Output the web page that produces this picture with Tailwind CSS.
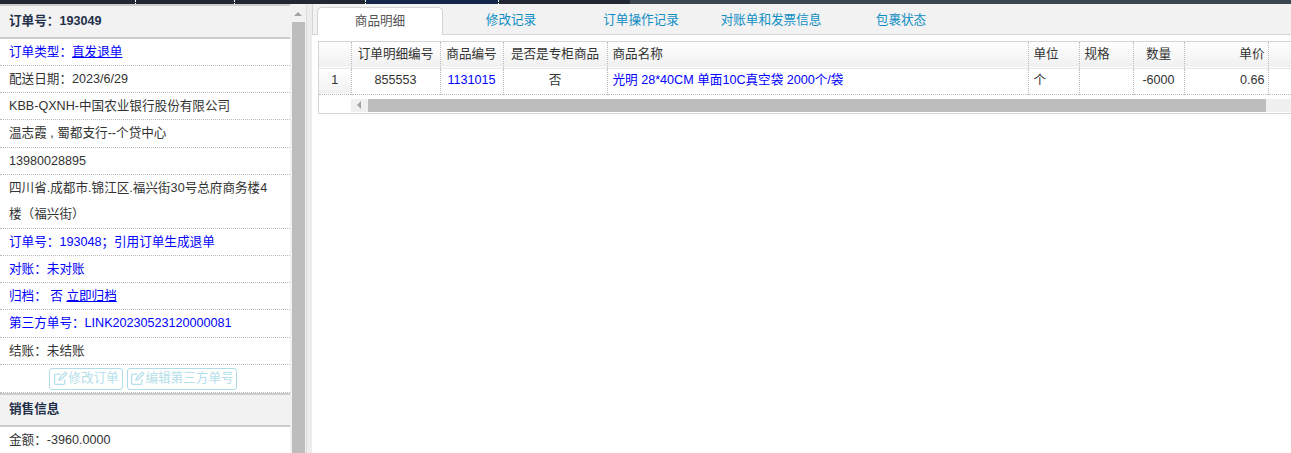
<!DOCTYPE html>
<html lang="zh-CN">
  <head>
    <meta charset="utf-8" />
    <meta name="viewport" content="width=device-width, initial-scale=1.0" />
    <title>订单明细</title>
    <script src="https://cdn.jsdelivr.net/npm/@tailwindcss/browser@4"></script>
  </head>
  <body class="h-[453px] w-[1291px] overflow-hidden bg-white font-['Liberation_Sans','Noto_Sans_CJK_SC',sans-serif] text-[12.6px] text-[#333]">
    <div class="flex h-1 bg-[#222831] [&>div]:border-r [&>div]:border-dotted [&>div]:border-white">
      <div class="w-[136px]"></div>
      <div class="w-[99px]"></div>
      <div class="w-[131px]"></div>
      <div class="w-[133px] bg-[#14274a]"></div>
      <div class="w-[131px] !border-r-0"></div>
      <div class="flex-1 !border-r-0 bg-[#3a4650]"></div>
    </div>
    <div class="flex h-[449px]">
      <aside class="flex w-[312px] shrink-0">
        <div class="w-[290px] shrink-0 overflow-hidden">
          <h2 class="flex h-[35px] items-center border-y-2 border-y-[#ccc] bg-[#f2f2f2] pl-[9px] font-bold text-[#1f3049]">订单号：193049</h2>
          <ul class="[&>li]:border-b [&>li]:border-dotted [&>li]:border-[#bbb] [&>li]:pl-[9px] [&>li]:leading-[26px]">
            <li class="h-[27px] text-[#00f]">订单类型：<span class="underline">直发退单</span></li>
            <li class="h-[27px]">配送日期：2023/6/29</li>
            <li class="h-[27px]">KBB-QXNH-中国农业银行股份有限公司</li>
            <li class="h-[28px]">温志霞 , 蜀都支行--个贷中心</li>
            <li class="h-[27px]">13980028895</li>
            <li class="h-[54px]">四川省.成都市.锦江区.福兴街30号总府商务楼4<br />楼（福兴街）</li>
            <li class="h-[27px] text-[#00f]">订单号：193048；引用订单生成退单</li>
            <li class="h-[27px] text-[#00f]">对账：未对账</li>
            <li class="h-[27px] text-[#00f]">归档： 否 <span class="underline">立即归档</span></li>
            <li class="h-[28px] text-[#00f]">第三方单号：LINK20230523120000081</li>
            <li class="h-[27px]">结账：未结账</li>
          </ul>
          <div class="flex h-[28px] items-center gap-[4px] border-b border-dotted border-[#bbb] pl-[49px] text-[#b5dfea]">
            <button class="flex h-[22px] w-[74px] items-center justify-center rounded-[3px] border border-[#b0dce8]">
              <svg class="h-[15px] w-[15px]" viewBox="0 0 14 14" fill="none" stroke="#b5dfea" stroke-width="1.2"><path d="M11 8v3.500a1 1 0 0 1-1 1H2.500a1 1 0 0 1-1-1V4a1 1 0 0 1 1-1H7" /><path d="M5.500 8.500 6 6.500 11.500 1 13 2.500 7.500 8z" /></svg>
              修改订单
            </button>
            <button class="flex h-[22px] w-[110px] items-center justify-center rounded-[3px] border border-[#b0dce8]">
              <svg class="h-[15px] w-[15px]" viewBox="0 0 14 14" fill="none" stroke="#b5dfea" stroke-width="1.2"><path d="M11 8v3.500a1 1 0 0 1-1 1H2.500a1 1 0 0 1-1-1V4a1 1 0 0 1 1-1H7" /><path d="M5.500 8.500 6 6.500 11.500 1 13 2.500 7.500 8z" /></svg>
              编辑第三方单号
            </button>
          </div>
          <h2 class="flex h-[34px] items-center border-y-2 border-y-[#ccc] bg-[#f2f2f2] pb-[2px] pl-[9px] font-bold text-[#1f3049]">销售信息</h2>
          <p class="pl-[9px] leading-[26px]">金额：-3960.0000</p>
        </div>
        <div class="flex w-[16px] shrink-0 flex-col items-center bg-[#f1f1f1]">
          <div class="mt-[8px] h-0 w-0 border-x-[4px] border-b-[4px] border-x-transparent border-b-[#a3a3a3]"></div>
          <div class="mt-[6px] h-full w-[13px] bg-[#bdbdbd]"></div>
        </div>
        <div class="w-px bg-[#ddd]"></div>
        <div class="w-[5px] bg-[#ececec]"></div>
      </aside>
      <main class="min-w-0 flex-1">
        <nav class="flex h-[31px] items-end border-b border-l border-[#d5d5d5] bg-[#f2f2f2] pl-[4px] text-[#0f8ec4]">
          <a class="mb-[-1px] flex h-[28px] w-[126px] items-center justify-center rounded-t-[5px] border border-b-0 border-[#d5d5d5] bg-white text-[#555]">商品明细</a>
          <a class="flex h-[28px] w-[136px] items-center justify-center">修改记录</a>
          <a class="flex h-[28px] w-[124px] items-center justify-center">订单操作记录</a>
          <a class="flex h-[28px] w-[136px] items-center justify-center">对账单和发票信息</a>
          <a class="flex h-[28px] w-[124px] items-center justify-center">包裹状态</a>
        </nav>
        <section class="ml-[6px] mt-[6px] border-y border-l border-[#d5d5d5]">
          <table class="w-full table-fixed border-collapse [&_td]:border-r [&_td]:border-dotted [&_td]:border-[#bbb] [&_td]:pb-[2px] [&_td:last-child]:border-r-0 [&_th]:border-r [&_th]:border-dotted [&_th]:border-[#bbb] [&_th]:pb-px [&_th]:font-normal [&_th:last-child]:border-r-0">
            <colgroup>
              <col class="w-[32px]" />
              <col class="w-[89px]" />
              <col class="w-[63px]" />
              <col class="w-[104px]" />
              <col class="w-[421px]" />
              <col class="w-[51px]" />
              <col class="w-[54px]" />
              <col class="w-[51px]" />
              <col class="w-[84px]" />
              <col />
            </colgroup>
            <thead>
              <tr class="h-[26px] border-b border-[#e6e6e6] bg-gradient-to-b from-white to-[#f0f0f0]">
                <th></th>
                <th>订单明细编号</th>
                <th>商品编号</th>
                <th>是否是专柜商品</th>
                <th class="pl-[5px] text-left">商品名称</th>
                <th class="pl-[5px] text-left">单位</th>
                <th class="pl-[5px] text-left">规格</th>
                <th>数量</th>
                <th class="pr-[3px] text-right">单价</th>
                <th></th>
              </tr>
            </thead>
            <tbody>
              <tr class="h-[26px] border-b border-dotted border-[#bbb] text-center">
                <td class="bg-gradient-to-b from-white to-[#f0f0f0]">1</td>
                <td>855553</td>
                <td class="text-[#00f]">1131015</td>
                <td>否</td>
                <td class="pl-[5px] text-left text-[#00f]">光明 28*40CM 单面10C真空袋 2000个/袋</td>
                <td class="pl-[5px] text-left">个</td>
                <td></td>
                <td>-6000</td>
                <td class="pr-[3px] text-right">0.66</td>
                <td></td>
              </tr>
            </tbody>
          </table>
          <div class="h-[18px] pl-[32px] pt-[4px]">
            <div class="flex h-[13px] items-center bg-[#f0f0f0]">
              <div class="ml-[6px] h-0 w-0 border-y-[4px] border-r-[4px] border-y-transparent border-r-[#a3a3a3]"></div>
              <div class="ml-[7px] h-[13px] w-[898px] bg-[#bdbdbd]"></div>
            </div>
          </div>
        </section>
      </main>
    </div>
  </body>
</html>
